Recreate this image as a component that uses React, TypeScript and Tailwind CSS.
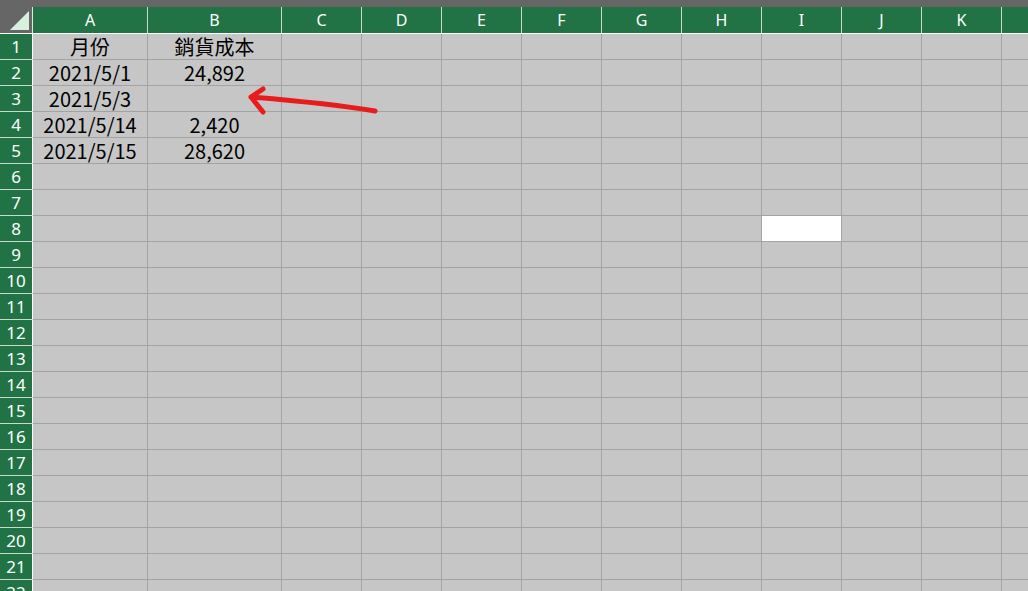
import React from "react";

const COLS = ["A", "B", "C", "D", "E", "F", "G", "H", "I", "J", "K", "L"];
const ROWS = Array.from({ length: 22 }, (_, i) => i + 1);

// sheet contents, keyed by row then column
const DATA: Record<number, Record<string, string>> = {
  1: { A: "月份", B: "銷貨成本" },
  2: { A: "2021/5/1", B: "24,892" },
  3: { A: "2021/5/3" },
  4: { A: "2021/5/14", B: "2,420" },
  5: { A: "2021/5/15", B: "28,620" },
};

const cellFont = { fontFamily: '"Noto Sans CJK TC", "Noto Sans", sans-serif' };
const headFont = { fontFamily: '"Noto Sans", "Liberation Sans", sans-serif' };

export default function App() {
  return (
    <div className="relative w-[1028px] h-[591px] overflow-hidden bg-[#c6c6c6]">
      <div className="h-[7px] bg-[#666666]" />
      <div className="grid w-max grid-cols-[33px_115px_134px_repeat(9,80px)_80px]">
        {/* corner */}
        <div className="h-[27px] bg-[#666666] border-r border-b border-r-[#e6e6e6] border-b-white flex items-end justify-end pr-[3px] pb-[3px]">
          <svg width="19" height="19" viewBox="0 0 19 19">
            <polygon points="0,19 19,0 19,19" fill="#d8f0e0" />
          </svg>
        </div>
        {COLS.map((c) => (
          <div
            key={c}
            className="h-[27px] bg-[#217346] border-r border-b border-r-[#c9d9cf] border-b-white flex items-center justify-center text-white text-[16px]"
            style={headFont}
          >
            {c}
          </div>
        ))}

        {ROWS.map((r) => (
          <React.Fragment key={r}>
            <div
              className="h-[26px] bg-[#217346] border-r border-b border-r-white border-b-[#c9d9cf] flex items-center justify-center text-white text-[17px]"
              style={headFont}
            >
              {r}
            </div>
            {COLS.map((c) => (
              <div
                key={c}
                className={`h-[26px] border-r border-b border-[#a3a3a3] flex items-center justify-center text-black text-[20px] leading-none whitespace-nowrap ${
                  r === 8 && c === "I" ? "bg-white" : "bg-[#c6c6c6]"
                }`}
                style={cellFont}
              >
                {DATA[r]?.[c] ?? ""}
              </div>
            ))}
          </React.Fragment>
        ))}
      </div>

      {/* hand-drawn arrow */}
      <svg className="absolute left-0 top-0 pointer-events-none" width="1028" height="591">
        <path
          d="M375 111 C 345 106, 300 101, 251 97 M251 97 L263 89 M251 97 L263 112"
          fill="none"
          stroke="#e81c1c"
          strokeWidth="5"
          strokeLinecap="round"
          strokeLinejoin="round"
        />
      </svg>
    </div>
  );
}
